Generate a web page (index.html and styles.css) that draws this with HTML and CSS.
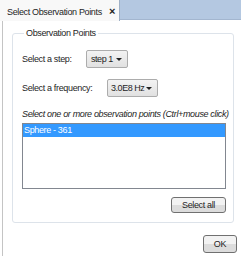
FILE: index.html
```html
<!DOCTYPE html>
<html lang="en">
<head>
  <meta charset="UTF-8" />
  <title>Select Observation Points</title>
  <link rel="stylesheet" href="styles.css">
</head>
<body>

<div class="tabbar">
  <div class="tab">Select Observation Points <span class="tab-close">&times;</span></div>
</div>

<div class="panel">
  <fieldset class="group">
    <legend>Observation Points</legend>

    <div class="row">
      <span class="label step-label">Select a step:</span>
      <span class="combo step-combo">step 1 <span class="arrow"></span></span>
    </div>

    <div class="row">
      <span class="label freq-label">Select a frequency:</span>
      <span class="combo freq-combo">3.0E8 Hz <span class="arrow"></span></span>
    </div>

    <p class="hint">Select one or more observation points (Ctrl+mouse click)</p>

    <div class="listbox">
      <div class="item selected">Sphere - 361</div>
    </div>

    <div class="buttons">
      <button class="btn select-all">Select all</button>
    </div>
  </fieldset>

  <div class="buttons footer">
    <button class="btn ok">OK</button>
  </div>
</div>

</body>
</html>
```

FILE: styles.css
```css
html, body {
  margin: 0;
  padding: 0;
}
body {
  width: 241px;
  height: 256px;
  overflow: hidden;
  background: #fff;
  font-family: "Liberation Sans", Arial, sans-serif;
  font-size: 9px;
  letter-spacing: -0.35px;
  color: #1e1e1e;
}

/* Tab strip */
.tabbar {
  display: flex;
  height: 20px;
  background: #b4c8e1;
  border-bottom: 1px solid #a3b6cf;
  box-sizing: border-box;
}
.tab {
  flex: none;
  width: 120px;
  height: 21px;
  box-sizing: border-box;
  background: #f8f8f8;
  border-right: 1px solid #9fb0c6;
  padding: 5px 0 0 7px;
  white-space: nowrap;
  overflow: hidden;
}
.tab-close {
  font-weight: bold;
  font-size: 11px;
  margin-left: 5px;
}

/* Panel */
.panel {
  margin-left: 2px;
  border-left: 1px solid #c4c4c4;
  height: 236px;
  padding: 8px 5px 0 9px;
}
.group {
  margin: 0;
  width: 219px;
  box-sizing: border-box;
  border: 1px solid #dde3ea;
  border-radius: 3px;
  padding: 12px 4px 9px 9px;
}
.group legend {
  padding: 0 2px;
  margin-left: 2px;
}

.row {
  display: flex;
  align-items: center;
  height: 18px;
  white-space: nowrap;
}
.row + .row {
  margin-top: 11px;
}
.label {
  display: inline-block;
}
.step-label {
  width: 64px;
}
.freq-label {
  width: 85px;
}
.combo {
  display: inline-flex;
  align-items: center;
  height: 18px;
  box-sizing: border-box;
  padding: 0 5px 0 4px;
  border: 1px solid #acacac;
  border-radius: 2px;
  background: linear-gradient(#f3f3f3, #e1e1e1);
  letter-spacing: -0.45px;
}
.step-combo {
  width: 42px;
}
.freq-combo {
  width: 51px;
  padding-left: 3px;
}
.arrow {
  margin-left: auto;
  width: 0;
  height: 0;
  border-left: 3px solid transparent;
  border-right: 3px solid transparent;
  border-top: 3px solid #222;
}

.hint {
  margin: 12px 0 4px;
  font-style: italic;
  white-space: nowrap;
}

.listbox {
  height: 66px;
  width: 204px;
  box-sizing: border-box;
  border: 1px solid #828790;
  background: #fff;
}
.item {
  height: 13px;
  line-height: 13px;
  padding-left: 1px;
}
.item.selected {
  background: #3399ff;
  color: #fff;
}

.buttons {
  display: flex;
  justify-content: flex-end;
}
.group .buttons {
  margin-top: 8px;
  width: 204px;
}
.btn {
  font-family: inherit;
  font-size: 9px;
  letter-spacing: -0.35px;
  color: #1e1e1e;
  height: 16px;
  padding: 0;
  border: 1px solid #707070;
  border-radius: 3px;
  background: linear-gradient(#f2f2f2 50%, #dcdcdc 50%);
}
.select-all {
  width: 55px;
}
.footer {
  margin-top: 12px;
  width: 225px;
}
.ok {
  width: 34px;
  height: 18px;
}
```
